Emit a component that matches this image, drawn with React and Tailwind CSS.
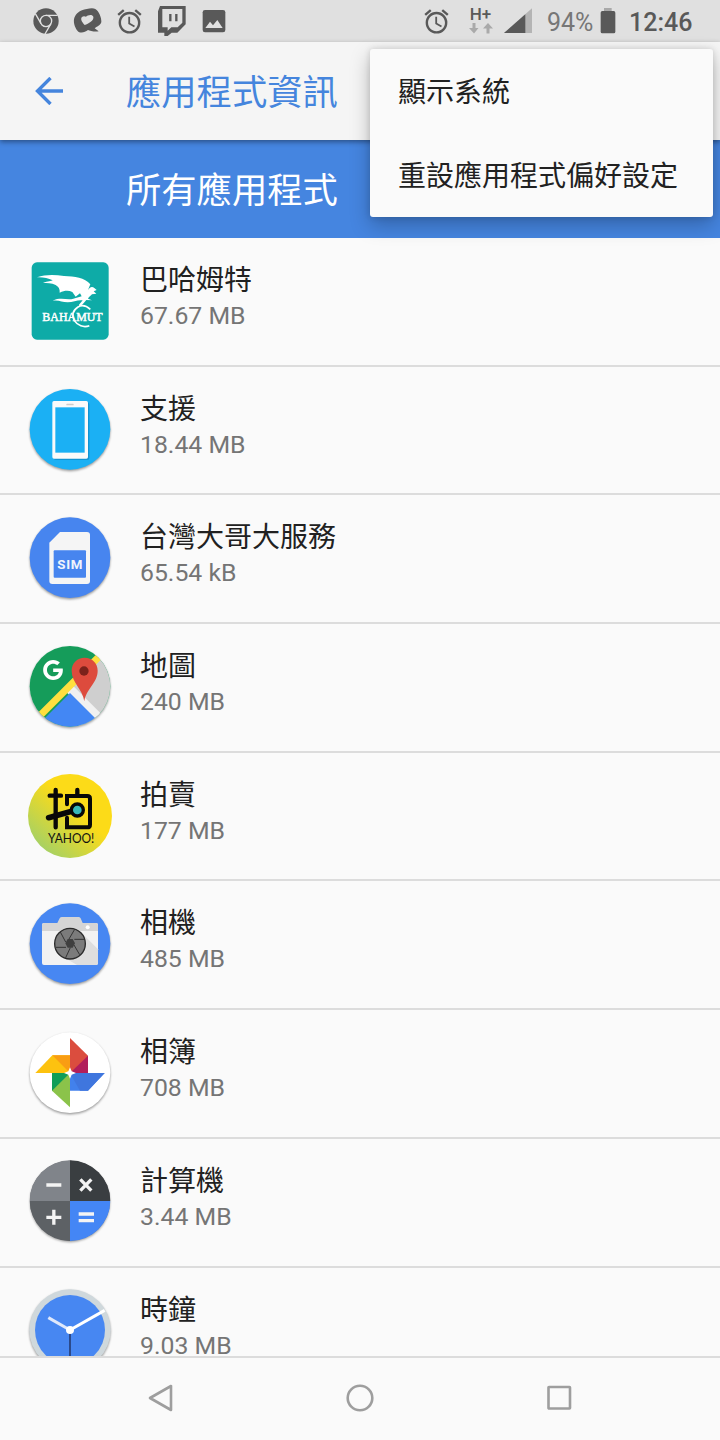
import { FaGoogle } from 'react-icons/fa';
import { MdAccessAlarm } from 'react-icons/md';

function ChromeGlyph() {
  return (
    <svg className="w-[26px] h-[42px]" viewBox="98 0 78 126" fill="none">
      <circle cx="137" cy="63" r="38" fill="#595959" />
      <circle cx="137" cy="63" r="17" stroke="#e0e0e0" strokeWidth="4" />
      <path d="M137 46h35M122 71 105 41M152 71 134 102" stroke="#e0e0e0" strokeWidth="4" />
    </svg>
  );
}

function ChatGlyph() {
  return (
    <svg className="w-[30px] h-[42px]" viewBox="219 0 90 126">
      <path
        d="M246 31C258 27 277 22 286 27C297 33 305 54 304 66C303 75 289 80 284 85L296 94C284 96 270 93 264 90C255 97 244 100 235 95C226 88 220 69 222 58C224 45 236 34 246 31Z"
        fill="#595959"
      />
      <path d="M254 75C246 66 240 57 246 51C250 47 256 49 258 50C263 45 277 42 280 50C283 61 265 71 254 75Z" fill="#e0e0e0" />
    </svg>
  );
}

function TwitchGlyph() {
  return (
    <svg className="w-[30px] h-[42px]" viewBox="471 0 90 126">
      <path d="M480 18H557V73L532 98H515L503 108H493V98H474V34Z" fill="#595959" />
      <path d="M487 27H547V68L533 82H514L503 92V82H487Z" fill="#e0e0e0" />
      <path d="M511 42v22M529 42v22" stroke="#595959" strokeWidth="7" />
    </svg>
  );
}

function ImageGlyph() {
  return (
    <svg className="w-[24px] h-[42px]" viewBox="605 0 72 126">
      <rect x="607" y="30" width="68" height="67" rx="7" fill="#595959" />
      <path d="M615 84 629 65 638 76 651 60 667 84Z" fill="#e0e0e0" />
    </svg>
  );
}

function SignalGlyph() {
  return (
    <svg className="w-[28px] h-[42px]" viewBox="312 0 84 126">
      <path d="M396 25V99H312Z" fill="#b4b4b4" />
      <path d="M376 43V99H312Z" fill="#595959" />
    </svg>
  );
}

function BatteryGlyph() {
  return (
    <svg className="w-[16px] h-[42px]" viewBox="600 0 48 126">
      <path d="M612 24h23v10h-23z" fill="#a9a9a9" />
      <rect x="602" y="33" width="44" height="67" rx="5" fill="#595959" />
    </svg>
  );
}

function StatusBar() {
  return (
    <header className="flex h-[42px] shrink-0 items-center bg-[#e0e0e0] pl-[32.5px] pr-7 text-[#595959]">
      <div className="flex flex-1 items-center">
        <ChromeGlyph />
        <div className="w-[14.5px]" />
        <ChatGlyph />
        <div className="w-[12px]" />
        <MdAccessAlarm className="h-[29px] w-[29px]" />
        <div className="w-[13px]" />
        <TwitchGlyph />
        <div className="w-[14.5px]" />
        <ImageGlyph />
      </div>
      <div className="flex items-center">
        <MdAccessAlarm className="h-[29px] w-[29px]" />
        <div className="ml-[16px] flex h-[42px] w-[27px] flex-col items-center pt-[5px]">
          <span className="text-[17px] leading-[18px] font-medium">H+</span>
          <svg className="h-[11px] w-[24px]" viewBox="0 0 24 11" fill="#aaa">
            <path d="M3.5 0h3v5h3L5 10.500 0 5h3.500zM17.500 10.500h3v-5h3.500L19 0l-5 5.500h3.500z" />
          </svg>
        </div>
        <div className="w-[10px]" />
        <SignalGlyph />
        <span className="ml-[15px] w-[45px] whitespace-nowrap pt-[2px] text-[25px] leading-none text-[#777]">94%</span>
        <div className="w-[8px]" />
        <BatteryGlyph />
        <span className="ml-[13px] w-[63px] whitespace-nowrap pt-[2px] text-[25px] leading-none font-medium">12:46</span>
      </div>
    </header>
  );
}

// Soft edge under the round launcher icons
const disc = 'drop-shadow-[0_4px_2.5px_rgba(0,0,0,0.4)]';

function BahamutIcon() {
  return (
    <svg className="h-[100px] w-[100px]" viewBox="0 3 300 300">
      <rect x="35" y="37" width="231" height="232" rx="16" fill="#0eaba7" />
      <path
        d="M51 82C76 73 104 74 132 78C164 79 194 83 211 103L204 120C210 111 216 108 223 114L230 120L221 124L229 131L216 133C211 138 206 141 204 146L216 151L199 150L188 163L178 170L177 164L188 151C175 148 160 157 143 157C126 157 117 149 98 152C120 141 143 151 160 146L185 139L180 130L167 140L157 126C146 121 134 121 119 128C120 117 116 110 107 105C95 99 80 99 69 99C84 93 94 94 98 91C84 85 69 81 51 82Z"
        fill="#fff"
      />
      <path d="M211 178C199 167 185 164 174 171C158 181 154 198 163 212C172 226 191 234 208 227" fill="none" stroke="#fff" strokeWidth="5" />
      <text x="67" y="212" textLength="181" lengthAdjust="spacingAndGlyphs" fontSize="38" fill="#fff" stroke="#fff" strokeWidth="1.5" className="font-['Liberation_Serif',serif]">
        BAHAMUT
      </text>
    </svg>
  );
}

function SupportIcon() {
  return (
    <svg className="h-[100px] w-[100px]" viewBox="0 -1 300 300">
      <circle className={disc} cx="150" cy="147" r="121" fill="#1bb0f4" />
      <rect x="101" y="66" width="107" height="173" rx="6" fill="#0d82bd" opacity=".6" />
      <rect x="97" y="62" width="107" height="173" rx="5" fill="#fafafa" />
      <rect x="106" y="81" width="88" height="136" fill="#1bb0f4" />
      <rect x="139" y="70" width="22" height="5" rx="2" fill="#ccc" />
    </svg>
  );
}

function SimIcon() {
  return (
    <svg className="h-[100px] w-[100px]" viewBox="0 383 300 300">
      <circle className={disc} cx="150" cy="532" r="121" fill="#4785ef" />
      <path d="M120 455H201Q210 455 210 464V602Q210 611 201 611H97Q88 611 88 602V487Z" fill="#f5f5f5" />
      <rect x="101" y="510" width="97" height="82" rx="3" fill="#4785ef" />
      <text x="149.500" y="566" textAnchor="middle" textLength="76" fontSize="40" fontWeight="700" fill="#f0f4fc" className="font-[Roboto,sans-serif]">
        SIM
      </text>
    </svg>
  );
}

function MapsIcon() {
  return (
    <svg className="h-[100px] w-[100px]" viewBox="0 5 300 300">
      <defs>
        <clipPath id="maps-disc">
          <circle cx="150" cy="153" r="121" />
        </clipPath>
      </defs>
      <circle className={disc} cx="150" cy="153" r="121" fill="#fff" />
      <g clipPath="url(#maps-disc)">
        <path d="M20 20h270v270H20z" fill="#159c5a" />
        <path d="M150 160 260 50 290 60V290H180Z" fill="#cfcfcf" />
        <path d="M139 171 159 151 265 257 245 267Z" fill="#f1f1f1" />
        <path d="M150 173 270 293H30Z" fill="#4387f4" />
        <path d="M46 255 242 59" stroke="#ffdf3f" strokeWidth="21" />
      </g>
      <path d="M193 198C188 160 155 143 155 106C155 83 172 67 194 67S233 83 233 106C233 143 198 160 193 198Z" fill="#dd4b3d" />
      <circle cx="192" cy="107" r="14" fill="#7b221b" />
      <FaGoogle x="68" y="73" size={62} color="#fff" />
    </svg>
  );
}

function AuctionIcon() {
  return (
    <svg className="h-[100px] w-[100px]" viewBox="0 3 300 300">
      <defs>
        <linearGradient id="auction-bg" x1="0.1" y1="0.9" x2="0.55" y2="0.4">
          <stop offset="0" stopColor="#9fd06a" />
          <stop offset="1" stopColor="#fcdb18" />
        </linearGradient>
      </defs>
      <circle cx="150" cy="153" r="126" fill="url(#auction-bg)" />
      <g fill="none" stroke="#080808" strokeWidth="12" strokeLinecap="round">
        <path d="M89 92h34M107 75v112M172 75v14" strokeWidth="13" />
        <path d="M141 118V93H202Q210 93 210 101V179Q210 187 202 187H141V158" />
        <path d="M86 158 158 138" strokeWidth="17" />
        <circle cx="172" cy="135" r="18" fill="#39b9ba" strokeWidth="10" />
      </g>
      <text x="84" y="235" textLength="139" lengthAdjust="spacingAndGlyphs" fontSize="42" fill="#111" className="font-[Lato,sans-serif]">
        YAHOO!
      </text>
    </svg>
  );
}

function CameraIcon() {
  return (
    <svg className="h-[100px] w-[100px]" viewBox="0 -3 300 300">
      <circle className={disc} cx="150" cy="146" r="121" fill="#4787f2" />
      <rect x="66" y="84" width="168" height="126" rx="6" fill="#f2f2f2" />
      <path d="M183 112 234 163V204Q234 210 228 210H171L116 178Z" fill="#dedede" />
      <path d="M66 108V90Q66 84 72 84H112L119 70Q121 66 126 66H175Q180 66 182 70L188 84H228Q234 84 234 90V108Z" fill="#d5d5d5" />
      <circle cx="150" cy="146" r="46" fill="#7b7b7b" stroke="#2b2b2b" strokeWidth="4" />
      <path d="M137 141 121 111M147 132 164 103M163 133H192M162 150 179 179M151 158 137 188M138 157H108" stroke="#333" strokeWidth="3" />
      <path d="M143 132H158L165 145L158 158H143L136 145Z" fill="#3f3f3f" />
      <circle cx="203" cy="97" r="6" fill="#fff" />
    </svg>
  );
}

function PhotosIcon() {
  return (
    <svg className="h-[100px] w-[100px]" viewBox="0 -1 300 300">
      <circle className={disc} cx="150" cy="148" r="121" fill="#fff" />
      <path d="M150 44 204 97V149H150Z" fill="#db4d3e" />
      <path d="M204 97V149H150Z" fill="#b21e5b" />
      <path d="M254 149 204 202H150V149Z" fill="#4281ec" />
      <path d="M150 149 180 202H204L254 149Z" fill="#3f76de" />
      <path d="M150 252 96 202V149H150Z" fill="#8bc34a" />
      <path d="M96 202V149H150Z" fill="#0f9d58" />
      <path d="M46 149 97 96H150V149Z" fill="#fdc20f" />
      <path d="M97 96H150V149Z" fill="#f99d13" />
      <path d="M150 132 155 144 168 149 155 154 150 166 145 154 132 149 145 144Z" fill="#fff" />
    </svg>
  );
}

function CalculatorIcon() {
  return (
    <svg className="h-[100px] w-[100px]" viewBox="0 6 300 300">
      <defs>
        <clipPath id="calc-disc">
          <circle cx="150" cy="152" r="121" />
        </clipPath>
      </defs>
      <circle className={disc} cx="150" cy="152" r="120" fill="#5c5f63" />
      <g clipPath="url(#calc-disc)">
        <path d="M28 30h122v123H28z" fill="#80848a" />
        <path d="M150 30h122v123H150z" fill="#3a3e41" />
        <path d="M28 153h122v122H28z" fill="#5d6165" />
        <path d="M150 153h122v122H150z" fill="#4486f5" />
      </g>
      <path d="M79 105h45M181 88l33 34M214 88l-33 34M79 202h45M101.500 179v45M176 192h46M176 212h46" stroke="#f4f4f4" strokeWidth="10" />
    </svg>
  );
}

function ClockIcon() {
  return (
    <svg className="h-[100px] w-[100px]" viewBox="0 392 300 300">
      <circle className={disc} cx="150" cy="539" r="122" fill="#cfd8dc" />
      <circle cx="150" cy="539" r="105" fill="#4787f2" />
      <path d="M150 539V644" stroke="#2b4a8b" strokeWidth="6" />
      <path d="M150 539 85 502" stroke="#dfe8fb" strokeWidth="9" />
      <path d="M150 539 254 480" stroke="#fff" strokeWidth="9" />
      <circle cx="150" cy="539" r="12" fill="#fff" />
    </svg>
  );
}

const apps = [
  { name: '巴哈姆特', size: '67.67 MB', Icon: BahamutIcon },
  { name: '支援', size: '18.44 MB', Icon: SupportIcon },
  { name: '台灣大哥大服務', size: '65.54 kB', Icon: SimIcon },
  { name: '地圖', size: '240 MB', Icon: MapsIcon },
  { name: '拍賣', size: '177 MB', Icon: AuctionIcon },
  { name: '相機', size: '485 MB', Icon: CameraIcon },
  { name: '相簿', size: '708 MB', Icon: PhotosIcon },
  { name: '計算機', size: '3.44 MB', Icon: CalculatorIcon },
  { name: '時鐘', size: '9.03 MB', Icon: ClockIcon },
];

function AppRow({ name, size, Icon }) {
  return (
    <li className="flex h-[128.7px] shrink-0 border-b-2 border-[#dcdcdc] pt-[13px] pl-5">
      <Icon />
      <div className="ml-5 flex flex-col pt-[10px]">
        <span className="text-[28px] leading-[40px] text-[#212121]">{name}</span>
        <span className="text-[24.8px] leading-[30px] text-[#757575]">{size}</span>
      </div>
    </li>
  );
}

function OverflowMenu() {
  return (
    <div className="absolute top-[49px] left-[370px] z-20 flex h-[168px] w-[343px] flex-col rounded-[3px] bg-[#fafafa] text-[28px] text-[#212121] shadow-[0_8px_20px_rgba(0,0,0,0.25),0_0_6px_rgba(0,0,0,0.14)]">
      <button type="button" className="h-[84px] px-7 pt-1 text-left">顯示系統</button>
      <button type="button" className="h-[84px] px-7 pt-1 text-left whitespace-nowrap">重設應用程式偏好設定</button>
    </div>
  );
}

export default function App() {
  return (
    <div className="relative flex h-[1440px] w-[720px] flex-col overflow-hidden bg-[#fafafa] font-[Roboto,'Noto_Sans_CJK_TC',sans-serif]">
      <StatusBar />

      {/* App bar */}
      <div className="z-10 flex h-[98px] shrink-0 items-center bg-[#f5f5f5] pl-[35px] shadow-[0_2px_5px_rgba(0,0,0,0.4)]">
        <svg className="h-[28px] w-[28px]" viewBox="0 0 28 28" fill="none" stroke="#4585dd" strokeWidth="3.4">
          <path d="M28 14H2M15.500 1 2.500 14l13 13" />
        </svg>
        <h1 className="ml-[63px] pt-1 text-[35.300px] text-[#4585dd]">應用程式資訊</h1>
      </div>

      {/* Filter spinner */}
      <div className="flex h-[98px] shrink-0 items-center bg-[#4585e0] pt-1 pl-[126px] text-[35.300px] text-white">
        所有應用程式
      </div>

      <ul className="flex min-h-0 flex-1 flex-col overflow-hidden">
        {apps.map((app) => (
          <AppRow key={app.name} {...app} />
        ))}
      </ul>

      {/* Navigation bar */}
      <nav className="flex h-[84px] shrink-0 items-center justify-between border-t-2 border-[#dcdcdc] bg-[#fafafa] px-[145px] pb-[2px]">
        <svg className="h-[30px] w-[30px]" viewBox="0 0 30 30" fill="none" stroke="#9e9e9e" strokeWidth="2.600" strokeLinejoin="round">
          <path d="M26 3V27L5 15Z" />
        </svg>
        <svg className="h-[30px] w-[30px]" viewBox="0 0 30 30" fill="none" stroke="#9e9e9e" strokeWidth="2.600">
          <circle cx="15" cy="15" r="12.300" />
        </svg>
        <svg className="h-[30px] w-[30px]" viewBox="0 0 30 30" fill="none" stroke="#9e9e9e" strokeWidth="2.600">
          <rect x="3.500" y="4" width="21.500" height="21.500" rx="0.500" />
        </svg>
      </nav>

      <OverflowMenu />
    </div>
  );
}
